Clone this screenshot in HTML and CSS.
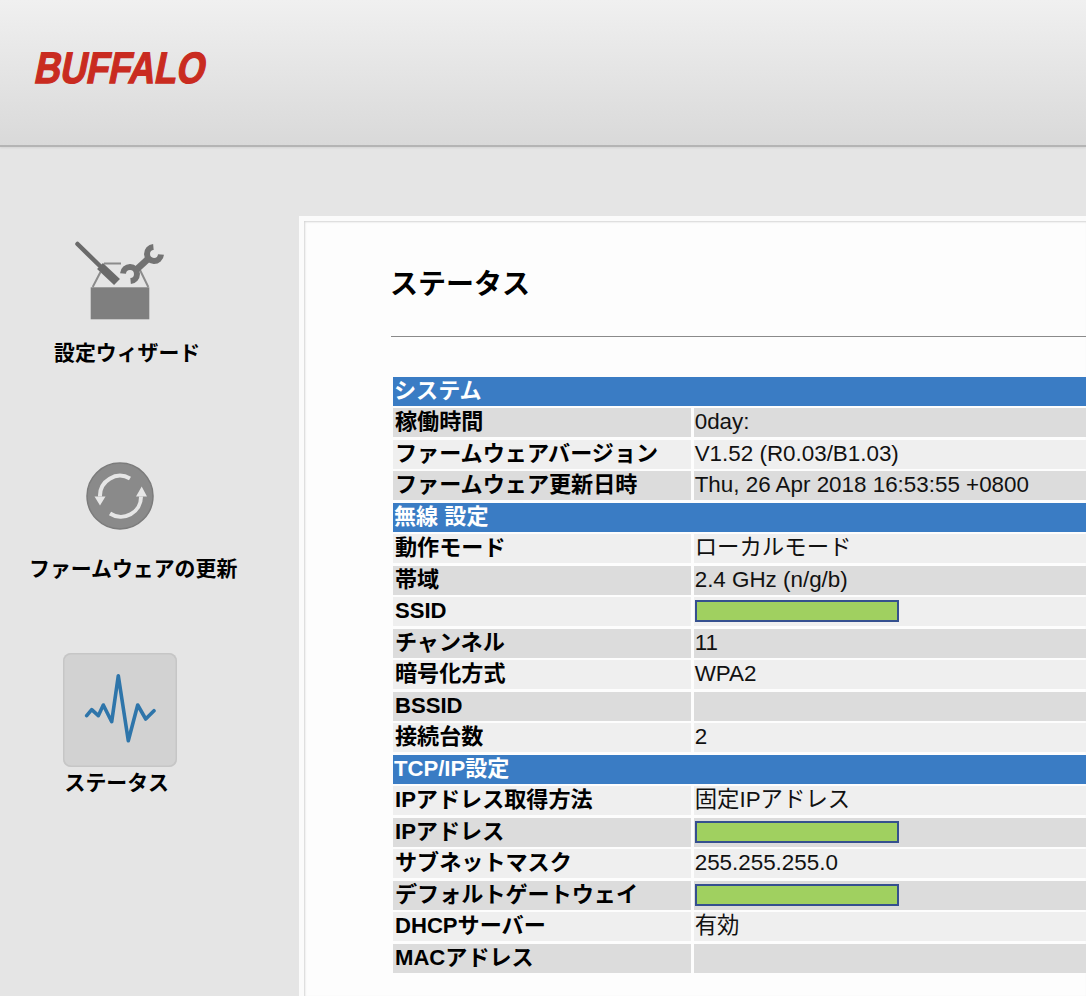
FILE: index.html
```html
<!DOCTYPE html>
<html lang="ja">
<head>
<meta charset="utf-8">
<title>ステータス</title>
<link rel="stylesheet" href="styles.css">
</head>
<body>
<header class="top-bar">
  <div class="logo">BUFFALO</div>
</header>
<div class="shell">
  <nav class="side-nav">
    <a class="nav-item">
      <span class="nav-tile">
        <svg class="nav-icon nav-icon-soft" viewBox="0 0 114 114">
          <path d="M29.7 64 37.5 49M41 40.5H58M76 45 85.3 64" fill="none" stroke="#8c8c8c" stroke-width="2"/>
          <rect x="27.7" y="64.3" width="58.6" height="32" fill="#7f7f7f"/>
          <path d="M14.5 21 37 43" stroke="#6a6a6a" stroke-width="4.5" stroke-linecap="round"/>
          <path d="M37 43 54 59" stroke="#6a6a6a" stroke-width="8.5"/>
          <path d="M73 47 85 36" stroke="#737373" stroke-width="6.5"/>
          <path d="M60 50.4A7 7 0 1 1 67.6 58M98 31.6A7 7 0 1 1 90.4 24" fill="none" stroke="#737373" stroke-width="6"/>
        </svg>
      </span>
      <span class="nav-label nav-label-wizard">設定ウィザード</span>
    </a>
    <a class="nav-item">
      <span class="nav-tile">
        <svg class="nav-icon nav-icon-soft" viewBox="0 0 114 114">
          <circle cx="57" cy="57" r="33" fill="#8a8a8a" stroke="#7b7b7b" stroke-width="1.5"/>
          <path d="M67 39.5A20 20 0 0 0 37 57.5M47 74.5A20 20 0 0 0 78 57.5" fill="none" stroke="#e6e6e6" stroke-width="4"/>
          <path d="M31.5 57.5H42.5L37 66.5ZM73 57.5H84L78.7 47.5Z" fill="#e6e6e6"/>
        </svg>
      </span>
      <span class="nav-label nav-label-firmware">ファームウェアの更新</span>
    </a>
    <a class="nav-item nav-item-active">
      <span class="nav-tile">
        <svg class="nav-icon nav-icon-soft" viewBox="0 0 114 114">
          <path d="M23.7 62.7 28.7 56.7 35.3 62.7 40.3 52 48.7 68.7 55.3 22.7 65.3 87.7 74.7 52 82.7 66 91 57.7" fill="none" stroke="#2e75aa" stroke-width="3.6" stroke-linejoin="round" stroke-linecap="round"/>
        </svg>
      </span>
      <span class="nav-label nav-label-status">ステータス</span>
    </a>
  </nav>
  <main class="panel">
    <h1 class="page-title">ステータス</h1>
    <hr class="divider">
    <div class="status-table">
      <div class="section">システム</div>
      <div class="row dark"><div class="key">稼働時間</div><div class="val">0day:</div></div>
      <div class="row light"><div class="key">ファームウェアバージョン</div><div class="val">V1.52 (R0.03/B1.03)</div></div>
      <div class="row dark"><div class="key">ファームウェア更新日時</div><div class="val">Thu, 26 Apr 2018 16:53:55 +0800</div></div>
      <div class="section">無線 設定</div>
      <div class="row light"><div class="key">動作モード</div><div class="val">ローカルモード</div></div>
      <div class="row dark"><div class="key">帯域</div><div class="val">2.4 GHz (n/g/b)</div></div>
      <div class="row light"><div class="key">SSID</div><div class="val"><span class="mask"></span></div></div>
      <div class="row dark"><div class="key">チャンネル</div><div class="val">11</div></div>
      <div class="row light"><div class="key">暗号化方式</div><div class="val">WPA2</div></div>
      <div class="row dark"><div class="key">BSSID</div><div class="val"></div></div>
      <div class="row light"><div class="key">接続台数</div><div class="val">2</div></div>
      <div class="section">TCP/IP設定</div>
      <div class="row light"><div class="key">IPアドレス取得方法</div><div class="val">固定IPアドレス</div></div>
      <div class="row dark"><div class="key">IPアドレス</div><div class="val"><span class="mask"></span></div></div>
      <div class="row light"><div class="key">サブネットマスク</div><div class="val">255.255.255.0</div></div>
      <div class="row dark"><div class="key">デフォルトゲートウェイ</div><div class="val"><span class="mask"></span></div></div>
      <div class="row light"><div class="key">DHCPサーバー</div><div class="val">有効</div></div>
      <div class="row dark"><div class="key">MACアドレス</div><div class="val"></div></div>
    </div>
  </main>
</div>
</body>
</html>
```
FILE: styles.css
```css
* { box-sizing: border-box; }
html, body { height: 100%; }
body {
  margin: 0;
  overflow: hidden;
  background: #e5e5e5;
  color: #000;
  font-family: "Liberation Sans", "Noto Sans CJK JP", sans-serif;
}
.top-bar {
  height: 147px;
  padding: 51px 0 0 33px;
  background: linear-gradient(#f0f0f0, #d9d9d9);
  border-bottom: 2px solid #b4b4b4;
  box-shadow: 0 1px 2px rgba(0, 0, 0, .08);
}
.logo {
  width: 215px;
  height: 32px;
  line-height: 33px;
  font-size: 44px;
  font-weight: 700;
  color: #c92b20;
  -webkit-text-stroke: 1.3px #c92b20;
  transform-origin: left bottom;
  transform: scaleX(.82) skewX(-14deg);
  white-space: nowrap;
}
.shell {
  display: flex;
  padding-top: 69px;
  height: 849px;
}
.side-nav {
  flex: 0 0 299px;
  display: flex;
  flex-direction: column;
  gap: 71px;
  padding: 7px 0 0 63px;
}
.nav-item {
  display: flex;
  flex-direction: column;
  gap: 2px;
  height: 145px;
}
.nav-item-active { margin-top: -2px; }
.nav-tile {
  display: block;
  flex: none;
  width: 114px;
  height: 114px;
  border-radius: 8px;
}
.nav-item-active .nav-tile {
  background: #d2d2d2;
  box-shadow: inset 0 0 0 1.5px #c6c6c6;
}
.nav-icon {
  display: block;
  width: 114px;
  height: 114px;
}
.nav-icon-soft { filter: blur(.35px); }
.nav-label {
  font-size: 20.9px;
  line-height: 28px;
  font-weight: 700;
  white-space: nowrap;
}
.nav-label-wizard { margin-left: -9px; }
.nav-label-firmware { margin-left: -34px; }
.nav-label-status { margin-left: 1.5px; }
.panel {
  flex: 1;
  min-width: 0;
  padding: 42px 0 0 87px;
  background: #fdfdfd;
  border: solid #fbfbfb;
  border-width: 5px 0 0 5px;
  box-shadow: inset 1px 1px 2px #d4d4d4;
}
.page-title {
  margin: 0 0 0 -1px;
  font-size: 28px;
  line-height: 44px;
  font-weight: 700;
}
.divider {
  height: 1px;
  margin: 29px 0 40px;
  border: 0;
  background: #8a8a8a;
}
.status-table {
  display: flex;
  flex-direction: column;
  gap: 2.7px;
  margin-left: 2px;
}
.section, .key, .val {
  height: 28.8px;
  line-height: 28px;
  font-size: 22.1px;
  white-space: nowrap;
}
.section {
  padding-left: 1px;
  background: #3a7cc4;
  color: #fff;
  font-weight: 700;
}
.row {
  display: grid;
  grid-template-columns: 298px 1fr;
  column-gap: 2.7px;
}
.key { padding-left: 2px; font-weight: 700; }
.val { padding-left: 1px; font-size: 22.4px; color: #111; }
.dark .key, .dark .val { background: #dcdcdc; }
.light .key, .light .val { background: #efefef; }
.mask {
  display: block;
  width: 204px;
  height: 22px;
  margin-top: 3px;
  background: #a0d060;
  border: 2px solid #35508f;
}
```
